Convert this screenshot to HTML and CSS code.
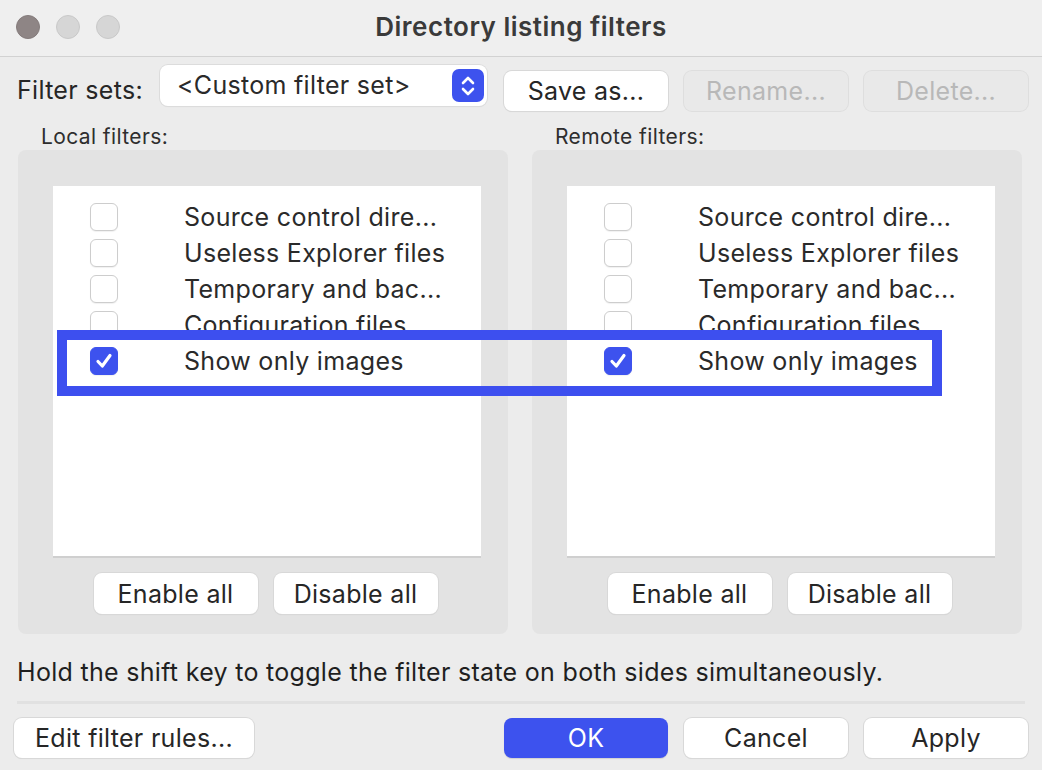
FILE: index.html
```html
<!DOCTYPE html>
<html>
<head>
<meta charset="utf-8">
<link rel="stylesheet" href="styles.css">
</head>
<body>
<div class="window">
  <div class="titlebar">
    <div class="lights">
      <span class="light light-close"></span>
      <span class="light"></span>
      <span class="light"></span>
    </div>
    <div class="title">Directory listing filters</div>
  </div>
  <div class="content">
    <div class="setrow">
      <span class="setlabel">Filter sets:</span>
      <div class="select">
        <span>&lt;Custom filter set&gt;</span>
        <span class="stepper">
          <svg width="32" height="32" viewBox="0 0 32 32"><path d="M11 13 L16 8 L21 13 M11 19 L16 24 L21 19" fill="none" stroke="#fff" stroke-width="2.6" stroke-linecap="round" stroke-linejoin="round"/></svg>
        </span>
      </div>
      <button class="btn btn-set">Save as...</button>
      <button class="btn btn-set disabled">Rename...</button>
      <button class="btn btn-set disabled">Delete...</button>
    </div>

    <div class="columns">
      <div class="col">
        <div class="collabel">Local filters:</div>
        <div class="panel">
          <div class="list">
            <div class="row"><span class="cb"></span><span class="rowtext">Source control dire...</span></div>
            <div class="row"><span class="cb"></span><span class="rowtext">Useless Explorer files</span></div>
            <div class="row"><span class="cb"></span><span class="rowtext">Temporary and bac...</span></div>
            <div class="row"><span class="cb"></span><span class="rowtext">Configuration files</span></div>
            <div class="row"><span class="cb checked"><svg width="28" height="28" viewBox="0 0 28 28"><path d="M8 14.5 L12.3 19 L20 8.5" fill="none" stroke="#fff" stroke-width="3.2" stroke-linecap="round" stroke-linejoin="round"/></svg></span><span class="rowtext">Show only images</span></div>
          </div>
          <div class="panelbtns">
            <button class="btn btn-panel">Enable all</button>
            <button class="btn btn-panel">Disable all</button>
          </div>
        </div>
      </div>
      <div class="col">
        <div class="collabel">Remote filters:</div>
        <div class="panel">
          <div class="list">
            <div class="row"><span class="cb"></span><span class="rowtext">Source control dire...</span></div>
            <div class="row"><span class="cb"></span><span class="rowtext">Useless Explorer files</span></div>
            <div class="row"><span class="cb"></span><span class="rowtext">Temporary and bac...</span></div>
            <div class="row"><span class="cb"></span><span class="rowtext">Configuration files</span></div>
            <div class="row"><span class="cb checked"><svg width="28" height="28" viewBox="0 0 28 28"><path d="M8 14.5 L12.3 19 L20 8.5" fill="none" stroke="#fff" stroke-width="3.2" stroke-linecap="round" stroke-linejoin="round"/></svg></span><span class="rowtext">Show only images</span></div>
          </div>
          <div class="panelbtns">
            <button class="btn btn-panel">Enable all</button>
            <button class="btn btn-panel">Disable all</button>
          </div>
        </div>
      </div>
      <div class="highlight"></div>
    </div>

    <div class="hint">Hold the shift key to toggle the filter state on both sides simultaneously.</div>
    <div class="sep"></div>
    <div class="bottom">
      <button class="btn btn-edit">Edit filter rules...</button>
      <div class="spacer"></div>
      <button class="btn btn-set primary">OK</button>
      <button class="btn btn-set">Cancel</button>
      <button class="btn btn-set">Apply</button>
    </div>
  </div>
</div>
</body>
</html>
```

FILE: styles.css
```css
* { box-sizing: border-box; }
html, body { margin: 0; padding: 0; }
body {
  width: 1042px;
  height: 770px;
  overflow: hidden;
  font-family: Inter, "Noto Sans", "Liberation Sans", sans-serif;
  color: #262626;
  background: #ececec;
}
.window {
  width: 1042px;
  height: 770px;
  background: #ececec;
  display: flex;
  flex-direction: column;
}
.titlebar {
  height: 57px;
  background: #efefef;
  border-bottom: 1px solid #d2d2d2;
  display: flex;
  align-items: center;
  position: relative;
}
.lights {
  display: flex;
  gap: 16px;
  padding-left: 16px;
  padding-bottom: 2px;
}
.light {
  width: 24px;
  height: 24px;
  border-radius: 50%;
  background: #d6d6d6;
  border: 1px solid #c9c9c9;
}
.light-close {
  background: #8e8585;
  border-color: #857c7c;
}
.title {
  position: absolute;
  left: 0;
  right: 0;
  top: 0;
  line-height: 54px;
  text-align: center;
  font-size: 26px;
  letter-spacing: 0.5px;
  font-weight: 600;
  color: #3a3a3a;
}
.content {
  flex: 1;
  display: flex;
  flex-direction: column;
  padding: 9px 14px 0 14px;
  font-size: 25px;
  letter-spacing: 0.3px;
}
.setrow {
  display: flex;
  align-items: center;
  height: 42px;
}
.setlabel {
  padding-left: 3px;
  width: 146px;
  padding-top: 6px;
  white-space: nowrap;
}
.select {
  width: 327px;
  height: 41px;
  margin-top: -3px;
  background: #fff;
  border-radius: 8px;
  box-shadow: 0 0 0 1px #dcdcdc, 0 1px 1px rgba(0,0,0,0.08);
  display: flex;
  align-items: center;
  justify-content: space-between;
  padding: 0 3px 0 17px;
  color: #2a2a2a;
}
.select span:first-child { padding-bottom: 2px; white-space: nowrap; }
.stepper {
  width: 32px;
  height: 33px;
  border-radius: 7px;
  background: #3d52ee;
  display: flex;
  align-items: center;
  justify-content: center;
}
.btn {
  font-family: inherit;
  font-size: 25px;
  letter-spacing: 0.3px;
  color: #262626;
  background: #fff;
  border: none;
  border-radius: 8px;
  box-shadow: 0 0 0 1px #d8d8d8, 0 1px 1px rgba(0,0,0,0.1);
  height: 40px;
  padding: 0;
  margin: 0;
  white-space: nowrap;
}
.btn-set {
  width: 164px;
  margin-left: 16px;
}
.setrow .btn-set:first-of-type { margin-left: 17px; }
.setrow .btn-set { margin-top: 7px; }
.btn.disabled {
  background: #e9e9e9;
  color: #b8b8b8;
  box-shadow: 0 0 0 1px #dedede;
}
.columns {
  position: relative;
  display: grid;
  grid-template-columns: 490px 490px;
  column-gap: 24px;
  padding-left: 4px;
  margin-top: 11px;
}
.collabel {
  font-size: 21px;
  letter-spacing: 0.4px;
  color: #2e2e2e;
  padding-left: 23px;
  padding-top: 3px;
  height: 31px;
  line-height: 30px;
}
.panel {
  height: 484px;
  background: #e3e3e3;
  border-radius: 8px;
  padding: 36px 27px 0 35px;
}
.list {
  height: 372px;
  background: #fff;
  border-bottom: 2px solid #cfcfcf;
  padding-top: 13px;
}
.row {
  height: 36px;
  display: flex;
  align-items: center;
}
.cb {
  width: 28px;
  height: 28px;
  margin-left: 37px;
  border-radius: 6px;
  background: #fff;
  border: 1px solid #cdcdcd;
  box-shadow: 0 1px 1px rgba(0,0,0,0.06);
  display: flex;
  flex-shrink: 0;
}
.cb.checked {
  background: #3d52ee;
  border-color: #3d52ee;
}
.cb.checked svg { margin: -1px; }
.rowtext {
  margin-left: 66px;
  color: #2a2a2a;
  white-space: nowrap;
}
.panelbtns {
  display: flex;
  justify-content: center;
  gap: 16px;
  padding-top: 15px;
  padding-right: 3px;
}
.btn-panel {
  width: 164px;
  height: 41px;
}
.highlight {
  position: absolute;
  left: 43px;
  top: 211px;
  width: 885px;
  height: 66px;
  border: 10px solid #3d4fef;
  pointer-events: none;
}
.hint {
  color: #1f1f1f;
  padding-left: 3px;
  margin-top: 22px;
  height: 32px;
  line-height: 32px;
  white-space: nowrap;
}
.sep {
  margin: 13px 3px 0 3px;
  height: 3px;
  background: #e1e1e1;
}
.bottom {
  display: flex;
  align-items: center;
  margin-top: 14px;
}
.btn-edit {
  width: 240px;
}
.spacer { flex: 1; }
.bottom .btn-set:first-of-type { margin-left: 0; }
.btn.primary {
  background: #3d52ee;
  color: #fff;
  box-shadow: 0 1px 1px rgba(0,0,0,0.12);
}
```
